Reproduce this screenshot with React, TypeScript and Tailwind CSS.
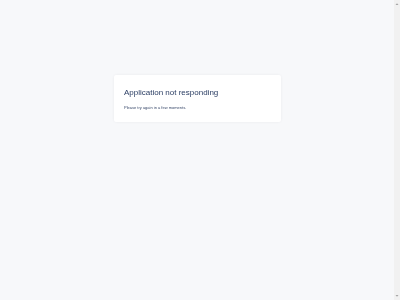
import React from "react";

export default function App() {
  return (
    <div className="flex h-[300px] w-[400px] overflow-hidden bg-[#f7f8fa] antialiased" style={{ fontFamily: '"Liberation Sans", Arial, sans-serif' }}>
      <div className="flex flex-1 flex-col items-center">
        <div className="mt-[75px] w-[167px] rounded-[2px] bg-white px-[10px] pt-[13.5px] pb-[12px] shadow-[0_0_3px_rgba(0,0,0,0.06)] [will-change:transform]">
          <div className="text-[8px] leading-none text-[#2a3d63]">Application not responding</div>
          <div className="mt-[9px] text-[4px] leading-none text-[#3a4a6b]">Please try again in a few moments.</div>
        </div>
      </div>
      <div className="flex w-[6px] flex-col justify-between bg-[#f1f1f1] py-[2px]">
        <svg width="6" height="4" viewBox="0 0 6 4"><path d="M1.5 3 L3 1.2 L4.5 3 Z" fill="#a3a3a3" /></svg>
        <svg width="6" height="4" viewBox="0 0 6 4"><path d="M1.5 1 L3 2.8 L4.5 1 Z" fill="#a3a3a3" /></svg>
      </div>
    </div>
  );
}
